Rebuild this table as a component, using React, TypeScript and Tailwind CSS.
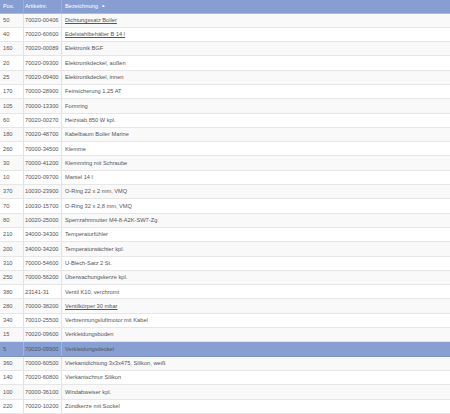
import React from "react";

const rows: [string, string, string, boolean?][] = [
  ["50", "70020-00406", "Dichtungssatz Boiler", true],
  ["40", "70020-60600", "Edelstahlbehälter B 14 l", true],
  ["160", "70020-00089", "Elektronik BGF"],
  ["20", "70020-09300", "Elektronikdeckel, außen"],
  ["25", "70020-09400", "Elektronikdeckel, innen"],
  ["170", "70000-28900", "Feinsicherung 1,25 AT"],
  ["105", "70000-13300", "Formring"],
  ["60", "70020-00270", "Heizstab 850 W kpl."],
  ["180", "70020-48700", "Kabelbaum Boiler Marine"],
  ["260", "70000-34500", "Klemme"],
  ["30", "70000-41200", "Klemmring mit Schraube"],
  ["10", "70020-09700", "Mantel 14 l"],
  ["370", "10030-23900", "O-Ring 22 x 2 mm, VMQ"],
  ["70", "10030-15700", "O-Ring 32 x 2,8 mm, VMQ"],
  ["80", "10020-25000", "Sperrzahnmutter M4-8-A2K-SW7-Zg"],
  ["210", "34000-34300", "Temperaturfühler"],
  ["200", "34000-34200", "Temperaturwächter kpl."],
  ["310", "70000-54600", "U-Blech-Satz 2 St."],
  ["250", "70000-56200", "Überwachungskerze kpl."],
  ["380", "23141-31", "Ventil K10, verchromt"],
  ["280", "70000-38200", "Ventilkörper 30 mbar", true],
  ["340", "70010-25500", "Verbrennungsluftmotor mit Kabel"],
  ["15", "70020-09600", "Verkleidungsboden"],
  ["5", "70020-09900", "Verkleidungsdeckel"],
  ["360", "70000-60500", "Vierkantdichtung 3x3x475, Silikon, weiß"],
  ["140", "70020-60800", "Vierkantschnur Silikon"],
  ["100", "70000-36100", "Windabweiser kpl."],
  ["220", "70020-10200", "Zündkerze mit Sockel"],
];

export default function App() {
  return (
    <div
      className="w-[450px] h-[414px] overflow-hidden bg-white text-[5.7px] text-[#555]"
      style={{ fontFamily: '"Liberation Sans", Arial, sans-serif' }}
    >
      <div className="flex h-[13.5px] items-center bg-[#879ed2] text-white border-b border-[#aebbe0]">
        <div className="w-[24px] h-full flex items-center pl-[3px] border-r border-[#9aaedb]">Pos.</div>
        <div className="w-[38px] h-full flex items-center pl-[1px] border-r border-[#9aaedb]">Artikelnr.</div>
        <div className="flex-1 h-full flex items-center pl-[3px]">
          Bezeichnung <span className="ml-[3px] text-[4.5px]">▲</span>
        </div>
      </div>
      {rows.map(([pos, art, name, link], i) => {
        const sel = pos === "5";
        const bg = sel ? "bg-[#889fd4] border-[#7d93c9]" : i % 2 === 0 ? "bg-[#f9f9f9] border-[#e6e6e6]" : "bg-white border-[#e6e6e6]";
        return (
          <div key={i} className={`flex h-[14.3px] border-b ${bg}`}>
            <div className={`w-[24px] h-full flex items-center pl-[3px] border-r ${sel ? "border-[#a4b3dc]" : "border-[#e2e2e2]"}`}>{pos}</div>
            <div className={`w-[38px] h-full flex items-center pl-[1px] border-r ${sel ? "border-[#a4b3dc]" : "border-[#e2e2e2]"}`}>{art}</div>
            <div className="flex-1 h-full flex items-center pl-[3px]">
              <span className={link ? "underline" : ""}>{name}</span>
            </div>
          </div>
        );
      })}
    </div>
  );
}
